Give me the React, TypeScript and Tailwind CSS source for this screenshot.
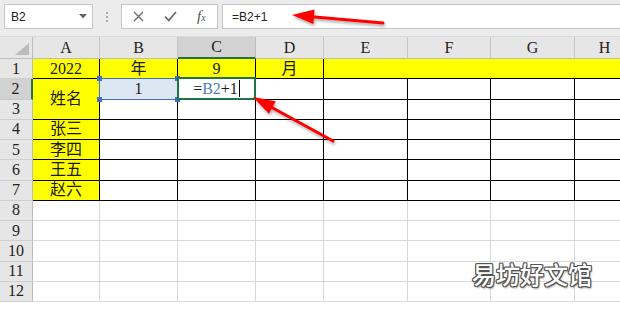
import React from "react";

const serif = "font-['Liberation_Serif','Noto_Sans_CJK_SC',serif]";

function ColHdr({ label, sel }: { label: string; sel?: boolean }) {
  return (
    <div
      className={
        sel
          ? `flex items-center justify-center bg-[#d2d2d2] border-r border-[#bdbdbd] border-b-2 border-b-[#217346] text-[16px] text-[#222] ${serif}`
          : `flex items-center justify-center bg-[#e6e6e6] border-r border-[#c6c6c6] border-b border-b-[#bdbdbd] text-[16px] text-[#222] ${serif}`
      }
    >
      {label}
    </div>
  );
}

function RowHdr({ n, sel }: { n: number; sel?: boolean }) {
  return (
    <div
      className={
        sel
          ? `flex items-center justify-center bg-[#d2d2d2] border-b border-[#c9c9c9] border-r-2 border-r-[#217346] text-[16px] text-[#222] ${serif}`
          : `flex items-center justify-center bg-[#e6e6e6] border-b border-[#cfcfcf] border-r border-r-[#bdbdbd] text-[16px] text-[#222] ${serif}`
      }
    >
      {n}
    </div>
  );
}

function Blk({ children, yellow }: { children?: React.ReactNode; yellow?: boolean }) {
  return (
    <div
      className={
        yellow
          ? `flex items-center justify-center bg-[#ffff00] border-r border-b border-black text-[16px] text-[#1a1a1a] ${serif}`
          : `flex items-center justify-center bg-white border-r border-b border-black text-[16px] text-[#1a1a1a] ${serif}`
      }
    >
      {children}
    </div>
  );
}

function Gray() {
  return <div className="bg-white border-r border-b border-[#d9d9d9]" />;
}

export default function App() {
  const rest = [4, 5, 6, 7];
  const names: Record<number, string> = { 4: "张三", 5: "李四", 6: "王五", 7: "赵六" };
  return (
    <div className="relative w-[620px] h-[309px] overflow-hidden bg-white">
      {/* formula bar */}
      <div className="h-[37px] bg-[#ececec] flex items-start pt-[4px] pl-[4px] border-b border-[#dadada]">
        <div className="w-[89px] h-[25px] bg-white border border-[#c6c6c6] flex items-center justify-between pl-[6px] pr-[5px]">
          <span className="text-[12px] text-[#222] font-['Liberation_Sans',sans-serif]">B2</span>
          <svg width="8" height="5" viewBox="0 0 8 5">
            <path d="M0 0 L8 0 L4 4.5 Z" fill="#666" />
          </svg>
        </div>
        <div className="w-[28px] h-[25px] flex flex-col items-center justify-center gap-[2px]">
          <div className="w-[2px] h-[2px] bg-[#a8a8a8]" />
          <div className="w-[2px] h-[2px] bg-[#a8a8a8]" />
          <div className="w-[2px] h-[2px] bg-[#a8a8a8]" />
        </div>
        <div className="w-[97px] h-[25px] bg-white border border-[#c6c6c6] flex items-center pl-[11px] gap-[20px]">
          <svg width="11" height="11" viewBox="0 0 11 11">
            <path d="M1 1 L10 10 M10 1 L1 10" stroke="#6a6a6a" strokeWidth="1.3" />
          </svg>
          <svg width="13" height="11" viewBox="0 0 13 11">
            <path d="M1 5.5 L4.8 9.5 L12 1" stroke="#6a6a6a" strokeWidth="1.8" fill="none" />
          </svg>
          <span className="text-[15px] text-[#555] italic font-['Liberation_Serif',serif] leading-none">
            f<span className="text-[10px]">x</span>
          </span>
        </div>
        <div className="ml-[4px] flex-1 h-[25px] bg-white border border-[#c6c6c6] border-r-0 flex items-center pl-[9px]">
          <span className="text-[12px] text-[#222] font-['Liberation_Sans',sans-serif]">=B2+1</span>
        </div>
      </div>

      {/* sheet */}
      <div className="grid grid-cols-[33px_67px_78px_78px_68px_84px_83px_84px_60px] grid-rows-[22px_repeat(12,20.25px)] w-[635px]">
        <div className="relative bg-[#e6e6e6] border-r border-b border-[#bdbdbd]">
          <svg className="absolute right-[3px] bottom-[3px]" width="14" height="12" viewBox="0 0 14 12">
            <path d="M14 0 L14 12 L0 12 Z" fill="#bcbcbc" />
          </svg>
        </div>
        <ColHdr label="A" />
        <ColHdr label="B" />
        <ColHdr label="C" sel />
        <ColHdr label="D" />
        <ColHdr label="E" />
        <ColHdr label="F" />
        <ColHdr label="G" />
        <ColHdr label="H" />

        {/* row 1 */}
        <RowHdr n={1} />
        <Blk yellow>2022</Blk>
        <Blk yellow>年</Blk>
        <Blk yellow>9</Blk>
        <Blk yellow>月</Blk>
        <div className="col-span-4 bg-[#ffff00] border-b border-black" />

        {/* row 2 */}
        <RowHdr n={2} sel />
        <div className={`row-span-2 flex items-center justify-center bg-[#ffff00] border-r border-b border-black text-[16px] text-[#1a1a1a] ${serif}`}>
          姓名
        </div>
        <div className={`relative flex items-center justify-center bg-[#dde7f4] border-r border-b border-black text-[16px] text-[#1a1a1a] ${serif}`}>
          1
          <div className="absolute left-[-1px] top-[-1px] right-[-1px] bottom-[-1px] border border-[#3f6fc6]" />
          <div className="absolute left-[-3px] top-[-3px] w-[5px] h-[5px] bg-[#3f6fc6]" />
          <div className="absolute right-[-3px] top-[-3px] w-[5px] h-[5px] bg-[#3f6fc6]" />
          <div className="absolute left-[-3px] bottom-[-3px] w-[5px] h-[5px] bg-[#3f6fc6]" />
          <div className="absolute right-[-3px] bottom-[-3px] w-[5px] h-[5px] bg-[#3f6fc6]" />
        </div>
        <div className={`relative flex items-center justify-center bg-white border-r border-b border-black text-[16px] text-[#1a1a1a] ${serif}`}>
          <span>
            =<span className="text-[#4a7ebb]">B2</span>+1
          </span>
          <span className="w-[1px] h-[17px] bg-black ml-[1px]" />
          <div className="absolute left-[-1px] top-[-2px] right-[-1px] bottom-[-1px] border-2 border-[#217346]" />
        </div>
        <Blk />
        <Blk />
        <Blk />
        <Blk />
        <Blk />

        {/* row 3 */}
        <RowHdr n={3} />
        <Blk />
        <Blk />
        <Blk />
        <Blk />
        <Blk />
        <Blk />
        <Blk />

        {rest.map((r) => (
          <React.Fragment key={r}>
            <RowHdr n={r} />
            <Blk yellow>{names[r]}</Blk>
            <Blk />
            <Blk />
            <Blk />
            <Blk />
            <Blk />
            <Blk />
            <Blk />
          </React.Fragment>
        ))}

        {[8, 9, 10, 11, 12].map((r) => (
          <React.Fragment key={r}>
            <RowHdr n={r} />
            <Gray />
            <Gray />
            <Gray />
            <Gray />
            <Gray />
            <Gray />
            <Gray />
            <Gray />
          </React.Fragment>
        ))}
      </div>

      {/* arrows */}
      <svg className="absolute left-0 top-0 pointer-events-none" width="620" height="309" viewBox="0 0 620 309">
        <defs>
          <filter id="sh" x="-20%" y="-50%" width="140%" height="200%">
            <feDropShadow dx="1" dy="2" stdDeviation="1.5" floodColor="#000" floodOpacity="0.35" />
          </filter>
        </defs>
        <g filter="url(#sh)" fill="#ff0000" stroke="#ff0000">
          <line x1="383" y1="23" x2="312" y2="16.8" strokeWidth="3" strokeLinecap="round" />
          <polygon points="292,15 314.4,9.4 313.4,24" stroke="none" />
          <line x1="333" y1="141" x2="271" y2="107" strokeWidth="3" strokeLinecap="round" />
          <polygon points="253,97 275.7,101.3 268.9,113.7" stroke="none" />
        </g>
      </svg>

      {/* watermark */}
      <div className="absolute left-[472px] top-[262px] text-[24px] leading-none font-medium text-white font-['Noto_Sans_CJK_SC',sans-serif] [text-shadow:1px_1px_0_#555,-1px_-1px_0_#555,1px_-1px_0_#555,-1px_1px_0_#555,0_1px_0_#555,0_-1px_0_#555,1px_0_0_#555,-1px_0_0_#555,1px_2px_2px_#999]">
        易坊好文馆
      </div>
    </div>
  );
}
